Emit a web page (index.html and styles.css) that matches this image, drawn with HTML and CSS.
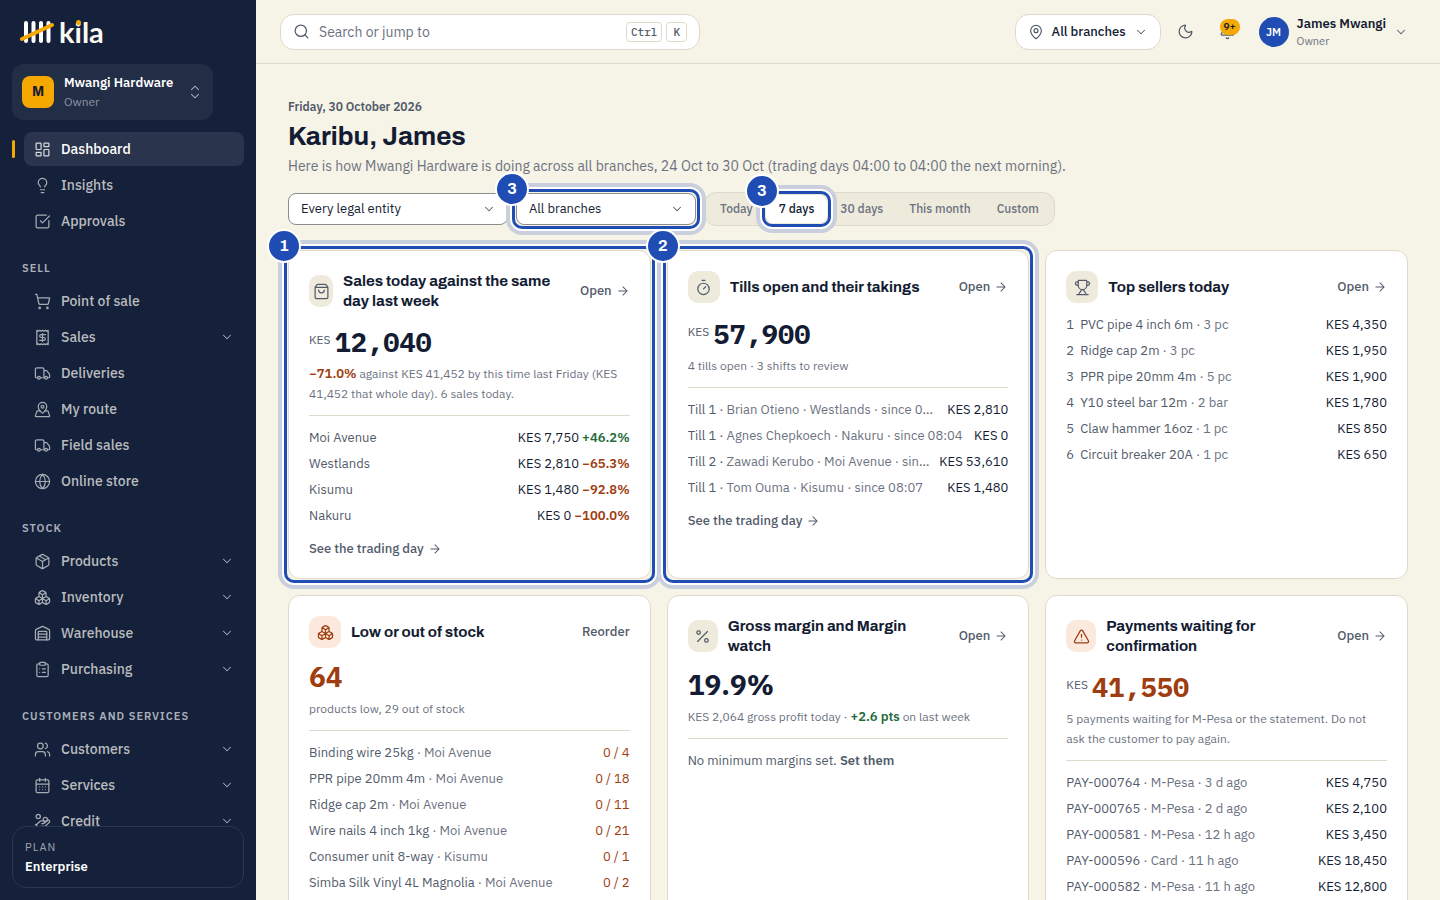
FILE: index.html
```html
<!DOCTYPE html>
<html lang="en">
<head>
<meta charset="utf-8">
<meta name="viewport" content="width=device-width, initial-scale=1">
<title>Kila – Dashboard</title>
<link rel="stylesheet" href="styles.css">
</head>
<body>
<svg class="sprite" aria-hidden="true">
  <symbol id="dashboard" viewBox="0 0 24 24"><rect x="3" y="3" width="7" height="9" rx="1"/><rect x="14" y="3" width="7" height="5" rx="1"/><rect x="14" y="12" width="7" height="9" rx="1"/><rect x="3" y="16" width="7" height="5" rx="1"/></symbol>
  <symbol id="bulb" viewBox="0 0 24 24"><path d="M15 14c.2-1 .7-1.7 1.5-2.5 1-.9 1.5-2.2 1.5-3.500A6 6 0 0 0 6 8c0 1 .2 2.200 1.500 3.500.700.700 1.300 1.500 1.500 2.500M9 18h6M10 22h4"/></symbol>
  <symbol id="check" viewBox="0 0 24 24"><path d="M21 10.656V19a2 2 0 0 1-2 2H5a2 2 0 0 1-2-2V5a2 2 0 0 1 2-2h12.344"/><path d="m9 11 3 3L22 4"/></symbol>
  <symbol id="cart" viewBox="0 0 24 24"><circle cx="8" cy="21" r="1"/><circle cx="19" cy="21" r="1"/><path d="M2.050 2.050h2l2.660 12.420a2 2 0 0 0 2 1.580h9.780a2 2 0 0 0 1.950-1.570l1.650-7.430H5.120"/></symbol>
  <symbol id="receipt" viewBox="0 0 24 24"><path d="M4 2v20l2-1 2 1 2-1 2 1 2-1 2 1 2-1 2 1V2l-2 1-2-1-2 1-2-1-2 1-2-1-2 1Z"/><path d="M16 8h-6a2 2 0 1 0 0 4h4a2 2 0 1 1 0 4H8M12 17.500v-11"/></symbol>
  <symbol id="truck" viewBox="0 0 24 24"><path d="M14 18V6a2 2 0 0 0-2-2H4a2 2 0 0 0-2 2v11a1 1 0 0 0 1 1h2M15 18H9M19 18h2a1 1 0 0 0 1-1v-3.650a1 1 0 0 0-.220-.624l-3.480-4.350A1 1 0 0 0 17.520 8H14"/><circle cx="17" cy="18" r="2"/><circle cx="7" cy="18" r="2"/></symbol>
  <symbol id="route" viewBox="0 0 24 24"><path d="M18 8c0 3.613-3.869 7.429-5.393 8.795a1 1 0 0 1-1.214 0C9.870 15.429 6 11.613 6 8a6 6 0 0 1 12 0"/><circle cx="12" cy="8" r="2"/><path d="M8.714 14h-3.710a1 1 0 0 0-.948.683l-2.004 6A1 1 0 0 0 3 22h18a1 1 0 0 0 .948-1.316l-2-6a1 1 0 0 0-.949-.684h-3.712"/></symbol>
  <symbol id="globe" viewBox="0 0 24 24"><circle cx="12" cy="12" r="10"/><path d="M12 2a14.500 14.500 0 0 0 0 20 14.500 14.500 0 0 0 0-20M2 12h20"/></symbol>
  <symbol id="package" viewBox="0 0 24 24"><path d="M11 21.730a2 2 0 0 0 2 0l7-4A2 2 0 0 0 21 16V8a2 2 0 0 0-1-1.730l-7-4a2 2 0 0 0-2 0l-7 4A2 2 0 0 0 3 8v8a2 2 0 0 0 1 1.730zM12 22V12"/><path d="M3.290 7 12 12l8.710-5M7.500 4.270l9 5.150"/></symbol>
  <symbol id="boxes" viewBox="0 0 24 24"><path d="M2.970 12.920A2 2 0 0 0 2 14.630v3.240a2 2 0 0 0 .970 1.710l3 1.800a2 2 0 0 0 2.060 0L12 19v-5.500l-5-3-4.030 2.420ZM7 16.500l-4.740-2.850M7 16.500l5-3M7 16.500v5.170M12 13.500V19l3.970 2.380a2 2 0 0 0 2.060 0l3-1.800a2 2 0 0 0 .970-1.710v-3.240a2 2 0 0 0-.970-1.710L17 10.500l-5 3ZM17 16.500l-5-3M17 16.500l4.740-2.850M17 16.500v5.170M7.970 4.420A2 2 0 0 0 7 6.130v4.370l5 3 5-3V6.130a2 2 0 0 0-.970-1.710l-3-1.800a2 2 0 0 0-2.060 0l-3 1.800ZM12 8 7.260 5.150M12 8l4.740-2.850M12 13.500V8"/></symbol>
  <symbol id="warehouse" viewBox="0 0 24 24"><path d="M18 21V10a1 1 0 0 0-1-1H7a1 1 0 0 0-1 1v11"/><path d="M22 19a2 2 0 0 1-2 2H4a2 2 0 0 1-2-2V8a2 2 0 0 1 1.132-1.803l7.950-3.974a2 2 0 0 1 1.837 0l7.948 3.974A2 2 0 0 1 22 8zM6 13h12M6 17h12"/></symbol>
  <symbol id="clipboard" viewBox="0 0 24 24"><rect x="8" y="2" width="8" height="4" rx="1"/><path d="M16 4h2a2 2 0 0 1 2 2v14a2 2 0 0 1-2 2H6a2 2 0 0 1-2-2V6a2 2 0 0 1 2-2h2M12 11h4M12 16h4M8 11h.010M8 16h.010"/></symbol>
  <symbol id="users" viewBox="0 0 24 24"><path d="M16 21v-2a4 4 0 0 0-4-4H6a4 4 0 0 0-4 4v2M16 3.128a4 4 0 0 1 0 7.744M22 21v-2a4 4 0 0 0-3-3.870"/><circle cx="9" cy="7" r="4"/></symbol>
  <symbol id="calendar" viewBox="0 0 24 24"><path d="M8 2v4M16 2v4M3 10h18M8 14h.010M12 14h.010M16 14h.010M8 18h.010M12 18h.010M16 18h.010"/><rect x="3" y="4" width="18" height="18" rx="2"/></symbol>
  <symbol id="coins" viewBox="0 0 24 24"><path d="M11 15h2a2 2 0 1 0 0-4h-3c-.6 0-1.100.2-1.400.6L3 17M7 21l1.600-1.400c.3-.4.8-.6 1.400-.6h4c1.100 0 2.100-.4 2.800-1.200l4.600-4.400a2 2 0 0 0-2.750-2.910l-4.200 3.900M2 16l6 6"/><circle cx="16" cy="9" r="2.900"/><circle cx="6" cy="5" r="3"/></symbol>
  <symbol id="down" viewBox="0 0 24 24"><path d="m6 9 6 6 6-6"/></symbol>
  <symbol id="updown" viewBox="0 0 24 24"><path d="m6 16 6 6 6-6M6 8l6-6 6 6"/></symbol>
  <symbol id="search" viewBox="0 0 24 24"><circle cx="11" cy="11" r="8"/><path d="m21 21-4.340-4.340"/></symbol>
  <symbol id="pin" viewBox="0 0 24 24"><path d="M20 10c0 4.993-5.539 10.193-7.399 11.799a1 1 0 0 1-1.202 0C9.539 20.193 4 14.993 4 10a8 8 0 0 1 16 0"/><circle cx="12" cy="10" r="3"/></symbol>
  <symbol id="moon" viewBox="0 0 24 24"><path d="M20.985 12.486a9 9 0 1 1-9.473-9.472c.405-.022.617.460.402.803a6 6 0 0 0 8.268 8.268c.344-.215.825-.004.803.401"/></symbol>
  <symbol id="bell" viewBox="0 0 24 24"><path d="M10.268 21a2 2 0 0 0 3.464 0M3.262 15.326A1 1 0 0 0 4 17h16a1 1 0 0 0 .740-1.673C19.410 13.956 18 12.499 18 8A6 6 0 0 0 6 8c0 4.499-1.411 5.956-2.738 7.326"/></symbol>
  <symbol id="bag" viewBox="0 0 24 24"><path d="M16 10a4 4 0 0 1-8 0M3.103 6.034h17.794M3.400 5.467a2 2 0 0 0-.4 1.200V20a2 2 0 0 0 2 2h14a2 2 0 0 0 2-2V6.667a2 2 0 0 0-.4-1.200l-2-2.667A2 2 0 0 0 17 2H7a2 2 0 0 0-1.600.8z"/></symbol>
  <symbol id="timer" viewBox="0 0 24 24"><path d="M10 2h4M12 14l3-3"/><circle cx="12" cy="14" r="8"/></symbol>
  <symbol id="trophy" viewBox="0 0 24 24"><path d="M10 14.660v1.626a2 2 0 0 1-.976 1.696A5 5 0 0 0 7 21.978M14 14.660v1.626a2 2 0 0 0 .976 1.696A5 5 0 0 1 17 21.978M18 9h1.500a1 1 0 0 0 0-5H18M4 22h16M6 9a6 6 0 0 0 12 0V3a1 1 0 0 0-1-1H7a1 1 0 0 0-1 1zM6 9H4.500a1 1 0 0 1 0-5H6"/></symbol>
  <symbol id="percent" viewBox="0 0 24 24"><path d="M19 5 5 19"/><circle cx="6.500" cy="6.500" r="2.500"/><circle cx="17.500" cy="17.500" r="2.500"/></symbol>
  <symbol id="alert" viewBox="0 0 24 24"><path d="m21.730 18-8-14a2 2 0 0 0-3.480 0l-8 14A2 2 0 0 0 4 21h16a2 2 0 0 0 1.730-3M12 9v4M12 17h.010"/></symbol>
  <symbol id="arrow" viewBox="0 0 24 24"><path d="M5 12h14M12 5l7 7-7 7"/></symbol>
</svg>
<div class="app">
  <aside class="sidebar">
    <a class="logo" href="#" aria-label="kila">
      <svg class="logo-mark" viewBox="0 0 34 24" aria-hidden="true"><path class="tally" d="M6 3v18M13.500 3v18M21 3v18M28.500 3v18"/><path class="slash" d="M2 19 32 5"/></svg>
      <span class="logo-name">k<span class="logo-i">i</span>la</span>
    </a>
    <button class="switcher" type="button">
      <span class="tile">M</span>
      <span class="who"><span class="who-name">Mwangi Hardware</span><span class="who-role">Owner</span></span>
      <svg class="icon small"><use href="#updown"/></svg>
    </button>
    <nav class="nav">
      <a class="item active" href="#"><svg class="icon"><use href="#dashboard"/></svg>Dashboard</a>
      <a class="item" href="#"><svg class="icon"><use href="#bulb"/></svg>Insights</a>
      <a class="item" href="#"><svg class="icon"><use href="#check"/></svg>Approvals</a>
      <h2 class="group">Sell</h2>
      <a class="item" href="#"><svg class="icon"><use href="#cart"/></svg>Point of sale</a>
      <a class="item" href="#"><svg class="icon"><use href="#receipt"/></svg>Sales<svg class="icon more"><use href="#down"/></svg></a>
      <a class="item" href="#"><svg class="icon"><use href="#truck"/></svg>Deliveries</a>
      <a class="item" href="#"><svg class="icon"><use href="#route"/></svg>My route</a>
      <a class="item" href="#"><svg class="icon"><use href="#truck"/></svg>Field sales</a>
      <a class="item" href="#"><svg class="icon"><use href="#globe"/></svg>Online store</a>
      <h2 class="group">Stock</h2>
      <a class="item" href="#"><svg class="icon"><use href="#package"/></svg>Products<svg class="icon more"><use href="#down"/></svg></a>
      <a class="item" href="#"><svg class="icon"><use href="#boxes"/></svg>Inventory<svg class="icon more"><use href="#down"/></svg></a>
      <a class="item" href="#"><svg class="icon"><use href="#warehouse"/></svg>Warehouse<svg class="icon more"><use href="#down"/></svg></a>
      <a class="item" href="#"><svg class="icon"><use href="#clipboard"/></svg>Purchasing<svg class="icon more"><use href="#down"/></svg></a>
      <h2 class="group">Customers and services</h2>
      <a class="item" href="#"><svg class="icon"><use href="#users"/></svg>Customers<svg class="icon more"><use href="#down"/></svg></a>
      <a class="item" href="#"><svg class="icon"><use href="#calendar"/></svg>Services<svg class="icon more"><use href="#down"/></svg></a>
      <a class="item" href="#"><svg class="icon"><use href="#coins"/></svg>Credit<svg class="icon more"><use href="#down"/></svg></a>
    </nav>
    <div class="plan"><span class="plan-label">PLAN</span><span class="plan-name">Enterprise</span></div>
  </aside>

  <div class="page">
    <header class="topbar">
      <label class="search">
        <svg class="icon"><use href="#search"/></svg>
        <input type="search" placeholder="Search or jump to" aria-label="Search or jump to">
        <kbd>Ctrl</kbd><kbd>K</kbd>
      </label>
      <div class="tools">
        <button class="branch" type="button"><svg class="icon medium"><use href="#pin"/></svg>All branches<svg class="icon small"><use href="#down"/></svg></button>
        <button class="tool" type="button" aria-label="Dark mode"><svg class="icon"><use href="#moon"/></svg></button>
        <button class="tool" type="button" aria-label="Notifications"><svg class="icon"><use href="#bell"/></svg><span class="count">9+</span></button>
        <button class="user" type="button">
          <span class="avatar">JM</span>
          <span class="who"><span class="user-name">James Mwangi</span><span class="user-role">Owner</span></span>
          <svg class="icon small"><use href="#down"/></svg>
        </button>
      </div>
    </header>

    <main class="main">
      <p class="date">Friday, 30 October 2026</p>
      <h1>Karibu, James</h1>
      <p class="intro">Here is how Mwangi Hardware is doing across all branches, 24 Oct to 30 Oct (trading days 04:00 to 04:00 the next morning).</p>

      <div class="filters">
        <div class="pick wide">
          <select aria-label="Legal entity"><option>Every legal entity</option></select>
          <svg class="icon small"><use href="#down"/></svg>
        </div>
        <div class="pick">
          <select aria-label="Branch"><option>All branches</option></select>
          <svg class="icon small"><use href="#down"/></svg>
          <div class="ring"><span class="step">3</span></div>
        </div>
        <div class="segments">
          <button type="button">Today</button>
          <button type="button" class="on">7 days<span class="ring"><span class="step">3</span></span></button>
          <button type="button">30 days</button>
          <button type="button">This month</button>
          <button type="button">Custom</button>
        </div>
      </div>

      <div class="cards">
        <section class="card">
          <header class="head"><span class="badge slim"><svg class="icon"><use href="#bag"/></svg></span><h2>Sales today against the same day last week</h2><a class="open" href="#">Open<svg class="icon small"><use href="#arrow"/></svg></a></header>
          <p class="amount money"><span class="cur">KES</span>12,040</p>
          <p class="note"><b class="down">−71.0%</b> against KES 41,452 by this time last Friday (KES 41,452 that whole day). 6 sales today.</p>
          <ul class="rows ruled">
            <li><span class="name">Moi Avenue</span><span class="val">KES 7,750 <b class="up">+46.2%</b></span></li>
            <li><span class="name">Westlands</span><span class="val">KES 2,810 <b class="down">−65.3%</b></span></li>
            <li><span class="name">Kisumu</span><span class="val">KES 1,480 <b class="down">−92.8%</b></span></li>
            <li><span class="name">Nakuru</span><span class="val">KES 0 <b class="down">−100.0%</b></span></li>
          </ul>
          <a class="see" href="#">See the trading day<svg class="icon small"><use href="#arrow"/></svg></a>
          <div class="ring"><span class="step">1</span></div>
        </section>

        <section class="card">
          <header class="head"><span class="badge"><svg class="icon"><use href="#timer"/></svg></span><h2>Tills open and their takings</h2><a class="open" href="#">Open<svg class="icon small"><use href="#arrow"/></svg></a></header>
          <p class="amount money"><span class="cur">KES</span>57,900</p>
          <p class="note">4 tills open · 3 shifts to review</p>
          <ul class="rows ruled">
            <li><span class="name">Till 1 · <span class="sub">Brian Otieno · Westlands · since 08:02</span></span><span class="val">KES 2,810</span></li>
            <li><span class="name">Till 1 · <span class="sub">Agnes Chepkoech · Nakuru · since 08:04</span></span><span class="val">KES 0</span></li>
            <li><span class="name">Till 2 · <span class="sub">Zawadi Kerubo · Moi Avenue · since 08:05</span></span><span class="val">KES 53,610</span></li>
            <li><span class="name">Till 1 · <span class="sub">Tom Ouma · Kisumu · since 08:07</span></span><span class="val">KES 1,480</span></li>
          </ul>
          <a class="see" href="#">See the trading day<svg class="icon small"><use href="#arrow"/></svg></a>
          <div class="ring"><span class="step">2</span></div>
        </section>

        <section class="card">
          <header class="head"><span class="badge"><svg class="icon"><use href="#trophy"/></svg></span><h2>Top sellers today</h2><a class="open" href="#">Open<svg class="icon small"><use href="#arrow"/></svg></a></header>
          <ol class="rows ranked">
            <li><span class="rank">1</span><span class="name">PVC pipe 4 inch 6m <span class="sub">· 3 pc</span></span><span class="val">KES 4,350</span></li>
            <li><span class="rank">2</span><span class="name">Ridge cap 2m <span class="sub">· 3 pc</span></span><span class="val">KES 1,950</span></li>
            <li><span class="rank">3</span><span class="name">PPR pipe 20mm 4m <span class="sub">· 5 pc</span></span><span class="val">KES 1,900</span></li>
            <li><span class="rank">4</span><span class="name">Y10 steel bar 12m <span class="sub">· 2 bar</span></span><span class="val">KES 1,780</span></li>
            <li><span class="rank">5</span><span class="name">Claw hammer 16oz <span class="sub">· 1 pc</span></span><span class="val">KES 850</span></li>
            <li><span class="rank">6</span><span class="name">Circuit breaker 20A <span class="sub">· 1 pc</span></span><span class="val">KES 650</span></li>
          </ol>
        </section>

        <section class="card">
          <header class="head"><span class="badge warn"><svg class="icon"><use href="#boxes"/></svg></span><h2>Low or out of stock</h2><a class="open" href="#">Reorder</a></header>
          <p class="amount down">64</p>
          <p class="note">products low, 29 out of stock</p>
          <ul class="rows ruled">
            <li><span class="name">Binding wire 25kg <span class="sub">· Moi Avenue</span></span><span class="val down">0 / 4</span></li>
            <li><span class="name">PPR pipe 20mm 4m <span class="sub">· Moi Avenue</span></span><span class="val down">0 / 18</span></li>
            <li><span class="name">Ridge cap 2m <span class="sub">· Moi Avenue</span></span><span class="val down">0 / 11</span></li>
            <li><span class="name">Wire nails 4 inch 1kg <span class="sub">· Moi Avenue</span></span><span class="val down">0 / 21</span></li>
            <li><span class="name">Consumer unit 8-way <span class="sub">· Kisumu</span></span><span class="val down">0 / 1</span></li>
            <li><span class="name">Simba Silk Vinyl 4L Magnolia <span class="sub">· Moi Avenue</span></span><span class="val down">0 / 2</span></li>
          </ul>
        </section>

        <section class="card">
          <header class="head"><span class="badge trim"><svg class="icon"><use href="#percent"/></svg></span><h2>Gross margin and Margin watch</h2><a class="open" href="#">Open<svg class="icon small"><use href="#arrow"/></svg></a></header>
          <p class="amount">19.9%</p>
          <p class="note">KES 2,064 gross profit today · <b class="up">+2.6 pts</b> on last week</p>
          <p class="rows ruled unset">No minimum margins set. <a href="#">Set them</a></p>
        </section>

        <section class="card">
          <header class="head"><span class="badge warn trim"><svg class="icon"><use href="#alert"/></svg></span><h2>Payments waiting for confirmation</h2><a class="open" href="#">Open<svg class="icon small"><use href="#arrow"/></svg></a></header>
          <p class="amount money down"><span class="cur">KES</span>41,550</p>
          <p class="note">5 payments waiting for M-Pesa or the statement. Do not ask the customer to pay again.</p>
          <ul class="rows ruled">
            <li><span class="name">PAY-000764 <span class="sub">· M-Pesa · 3 d ago</span></span><span class="val">KES 4,750</span></li>
            <li><span class="name">PAY-000765 <span class="sub">· M-Pesa · 2 d ago</span></span><span class="val">KES 2,100</span></li>
            <li><span class="name">PAY-000581 <span class="sub">· M-Pesa · 12 h ago</span></span><span class="val">KES 3,450</span></li>
            <li><span class="name">PAY-000596 <span class="sub">· Card · 11 h ago</span></span><span class="val">KES 18,450</span></li>
            <li><span class="name">PAY-000582 <span class="sub">· M-Pesa · 11 h ago</span></span><span class="val">KES 12,800</span></li>
          </ul>
        </section>
      </div>
    </main>
  </div>
</div>
</body>
</html>
```

FILE: styles.css
```css
:root {
  --navy: #15203a;
  --ink: #141c33;
  --text: #535b6b;
  --muted: #6c7280;
  --paper: #f6f3e7;
  --line: #dedacb;
  --sand: #eeeadc;
  --blue: #1f4db4;
  --gold: #f5a800;
  --rust: #9f3d10;
  --green: #1f6b3c;
  --sans: "IBM Plex Sans", "Noto Sans", sans-serif;
  --head: "Archivo", "Liberation Sans", sans-serif;
  --mono: "IBM Plex Mono", "Liberation Mono", monospace;
}

* { box-sizing: border-box; }

body {
  margin: 0;
  background: var(--paper);
  color: var(--ink);
  font: 400 13px/20px var(--sans);
}

h1, h2, p, ul, ol { margin: 0; padding: 0; }
ul, ol { list-style: none; }
a { color: inherit; text-decoration: none; }
button, input, select { font: inherit; color: inherit; }
button { border: 0; background: none; padding: 0; cursor: pointer; text-align: left; }

.sprite { display: none; }

.icon {
  flex: none;
  width: 17px;
  height: 17px;
  fill: none;
  stroke: currentColor;
  stroke-width: 1.75;
  stroke-linecap: round;
  stroke-linejoin: round;
}
.icon.small { width: 14px; height: 14px; }
.icon.medium { width: 16px; height: 16px; }

.app { display: flex; height: 100vh; overflow: hidden; }

/* Sidebar */
.sidebar {
  flex: none;
  display: flex;
  flex-direction: column;
  width: 256px;
  padding: 0 12px 12px;
  background: var(--navy);
  color: #fff;
}

.logo { display: flex; align-items: center; gap: 5px; height: 64px; padding-left: 8px; }
.logo-mark { width: 34px; height: 24px; fill: none; stroke-width: 4; stroke-linecap: round; }
.tally { stroke: #fff; }
.slash { stroke: var(--gold); }
.logo-name { font: 700 29px/34px Lato, sans-serif; color: #fbf9f0; }
.logo-i { position: relative; }
.logo-i::after {
  content: "";
  position: absolute;
  top: 6px;
  left: 1px;
  width: 5px;
  height: 5px;
  border-radius: 50%;
  background: var(--gold);
}

.switcher {
  display: flex;
  align-items: center;
  align-self: flex-start;
  gap: 10px;
  height: 56px;
  min-width: 201px;
  padding: 0 11px 0 10px;
  border-radius: 12px;
  background: #222d46;
}
.tile {
  display: grid;
  place-items: center;
  flex: none;
  width: 32px;
  height: 32px;
  border-radius: 8px;
  background: var(--gold);
  color: var(--ink);
  font: 700 14px/20px var(--head);
}
.who { display: flex; flex-direction: column; flex: 1; white-space: nowrap; }
.who-name { font-weight: 600; line-height: 20px; }
.who-role { color: #8f96a3; font-size: 12px; line-height: 18px; }
.switcher .icon { color: #a5abb5; }

.nav {
  display: flex;
  flex: 1;
  flex-direction: column;
  gap: 2px;
  min-height: 0;
  margin: 12px 0 0 -12px;
  padding-left: 24px;
  overflow: auto;
  scrollbar-width: none;
}
.item {
  position: relative;
  display: flex;
  flex: none;
  align-items: center;
  gap: 10px;
  height: 34px;
  padding: 0 10px;
  border-radius: 8px;
  color: #b9bcbe;
  font-size: 14px;
  font-weight: 500;
}
.item .icon { color: #a6acb4; }
.item .more { width: 14px; height: 14px; margin-left: auto; }
.item.active { background: #2a354d; color: #fff; }
.item.active .icon { color: #d5d8dd; }
.item.active::before {
  content: "";
  position: absolute;
  top: 8px;
  left: -12px;
  width: 3px;
  height: 18px;
  border-radius: 2px;
  background: var(--gold);
}
.group {
  flex: none;
  margin: 18px 0 4px -2px;
  color: #aab0ba;
  font: 600 11px/20px var(--sans);
  letter-spacing: 1px;
  text-transform: uppercase;
}

.plan {
  display: flex;
  flex: none;
  flex-direction: column;
  height: 62px;
  padding: 10px 12px;
  border: 1px solid #2b3650;
  border-radius: 14px;
}
.plan-label { color: #a0a6b1; font-size: 11px; letter-spacing: 1px; }
.plan-name { font-weight: 600; }

/* Top bar */
.page { display: flex; flex: 1; flex-direction: column; min-width: 0; }
.topbar {
  display: flex;
  flex: none;
  align-items: center;
  justify-content: space-between;
  gap: 24px;
  height: 64px;
  padding: 0 32px 0 24px;
  border-bottom: 1px solid var(--line);
}
.search {
  display: flex;
  flex: 1;
  align-items: center;
  gap: 4px;
  max-width: 420px;
  height: 36px;
  padding: 0 12px;
  border: 1px solid var(--line);
  border-radius: 14px;
  background: #fff;
  color: var(--text);
}
.search input {
  flex: 1;
  min-width: 0;
  padding: 0 0 0 5px;
  border: 0;
  outline: 0;
  background: none;
  font-size: 14px;
}
.search input::placeholder { color: var(--muted); opacity: 1; }
kbd {
  padding: 0 4px;
  border: 1px solid var(--line);
  border-radius: 4px;
  font: 500 11px/18px var(--mono);
}
kbd + kbd { padding: 0 6px; }

.tools { display: flex; align-items: center; gap: 8px; }
.branch {
  display: flex;
  align-items: center;
  gap: 8px;
  height: 36px;
  padding: 0 12px;
  border: 1px solid var(--line);
  border-radius: 14px;
  background: #fff;
  font-weight: 500;
  white-space: nowrap;
}
.branch .icon, .tool, .user .icon { color: var(--text); }
.tool { position: relative; display: grid; place-items: center; width: 34px; height: 34px; }
.count {
  position: absolute;
  top: 4px;
  right: 5px;
  padding: 0 4px;
  border-radius: 8px;
  background: var(--gold);
  color: var(--ink);
  font-size: 10px;
  font-weight: 600;
  line-height: 16px;
}
.user { display: flex; align-items: center; gap: 8px; padding-left: 6px; }
.avatar {
  display: grid;
  place-items: center;
  width: 30px;
  height: 30px;
  border-radius: 50%;
  background: var(--blue);
  color: #fff;
  font-size: 11px;
  font-weight: 600;
}
.user-name { font-weight: 600; line-height: 18px; }
.user-role { color: var(--muted); font-size: 11px; line-height: 16px; }

/* Content */
.main {
  flex: 1;
  min-height: 0;
  padding: 33px 32px 32px;
  overflow: auto;
  scrollbar-width: none;
}
.date { color: var(--text); font-size: 12px; font-weight: 600; }
h1 { margin-top: 3px; font: 700 26px/32px var(--head); }
.intro { margin-top: 4px; color: var(--muted); font-size: 14px; line-height: 20px; }

.filters { display: flex; align-items: center; gap: 8px; margin-top: 16px; }
.pick { position: relative; width: 180px; }
.pick.wide { width: 220px; }
.pick select {
  display: block;
  width: 100%;
  height: 32px;
  padding: 0 32px 0 12px;
  border: 1px solid #8b8c8e;
  border-radius: 8px;
  appearance: none;
  background: #fff;
}
.pick .icon { position: absolute; top: 9px; right: 12px; color: var(--text); pointer-events: none; }

.segments {
  display: flex;
  padding: 2px;
  border: 1px solid var(--line);
  border-radius: 12px;
  background: var(--sand);
}
.segments button {
  position: relative;
  height: 28px;
  padding: 0 13px;
  border-radius: 8px;
  color: var(--muted);
  font-size: 12px;
  font-weight: 500;
  white-space: nowrap;
}
.segments .on { background: #fff; color: var(--ink); }

/* Numbered highlights */
.ring {
  position: absolute;
  inset: -4px;
  z-index: 1;
  border: 3px solid var(--blue);
  border-radius: 10px;
  box-shadow: 0 0 0 2px #fff, 0 0 0 6px #c9cfdc;
  pointer-events: none;
}
.card > .ring { inset: -5px; }
.step {
  position: absolute;
  top: -18px;
  left: -18px;
  width: 30px;
  height: 30px;
  border-radius: 50%;
  box-shadow: 0 0 0 2px #fff;
  background: var(--blue);
  color: #fff;
  font: 700 16px/30px var(--head);
  text-align: center;
}

/* Cards */
.cards {
  display: grid;
  grid-template-columns: repeat(3, minmax(0, 1fr));
  gap: 16px;
  margin-top: 24px;
}
.card {
  position: relative;
  padding: 20px 20px 19px;
  border: 1px solid var(--line);
  border-radius: 12px;
  background: #fff;
}
.head { display: flex; align-items: center; gap: 10px; }
.badge {
  display: grid;
  place-items: center;
  flex: none;
  width: 32px;
  height: 32px;
  border-radius: 10px;
  background: var(--sand);
  color: var(--text);
}
.badge.slim { width: 24px; }
.badge.trim { width: 30px; }
.badge.warn { background: #fce9de; color: var(--rust); }
.head h2 { flex: 1; font: 700 15px/20px var(--head); }
.open, .see { display: flex; align-items: center; gap: 4px; color: var(--text); font-weight: 500; }
.amount { margin-top: 12px; font: 700 28px/34px var(--sans); }
.amount.money { padding-top: 2px; font: 700 27px/34px var(--mono); }
.cur {
  margin-right: 4px;
  color: var(--text);
  font: 400 12px/12px var(--sans);
  vertical-align: 8px;
}
.note { margin-top: 5px; color: var(--muted); font-size: 12px; }
.note b { font-size: 13px; }
.rows { margin-top: 9px; color: var(--text); }
.rows.ruled { margin-top: 11px; padding-top: 9px; border-top: 1px solid var(--line); }
.rows li { display: flex; justify-content: space-between; gap: 8px; line-height: 26px; }
.name { flex: 1; min-width: 0; overflow: hidden; text-overflow: ellipsis; white-space: nowrap; }
.rows.ranked li { gap: 6px; }
.sub { color: var(--muted); }
.val { flex: none; color: var(--ink); }
.unset { line-height: 26px; }
.unset a { font-weight: 600; }
.see { margin-top: 10px; }
b { font-weight: 600; }
.down { color: var(--rust); }
.up { color: var(--green); }
```
